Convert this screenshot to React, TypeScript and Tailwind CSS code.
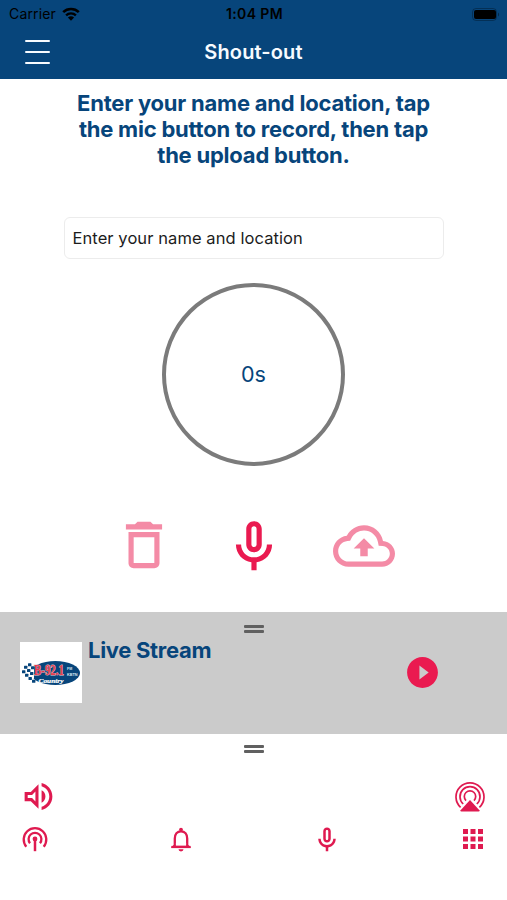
import type { ReactNode } from "react";
import cx from "clsx";

const App = () => (
  <div className="flex h-[900px] w-[507px] flex-col overflow-hidden bg-white font-['Inter','Liberation_Sans',sans-serif] text-[#07457b]">
    <Header />
    <Recorder />
    <Player />
    <Footer />
  </div>
);

const Header = () => (
  <header className="h-[79px] shrink-0 bg-[#07457b]">
    <div className="grid h-7 grid-cols-3 items-center pr-[7px] pl-[9px] text-black">
      <div className="flex items-center gap-[6px]">
        <span className="text-[14px] leading-none tracking-[0.15px]">Carrier</span>
        <svg width="18" height="14" viewBox="0 0 18 14" fill="none">
          <path d="M1.2 5.1a11.3 11.3 0 0 1 15.6 0" stroke="currentColor" strokeWidth="2.6" />
          <path d="M4.1 8.3a7.1 7.1 0 0 1 9.8 0" stroke="currentColor" strokeWidth="2.4" />
          <path d="M9 13.7 5.9 10.6a4.5 4.5 0 0 1 6.2 0Z" fill="currentColor" />
        </svg>
      </div>
      <span className="text-center text-[14px] leading-none font-semibold tracking-[0.4px] whitespace-nowrap">
        1:04 PM
      </span>
      <svg className="justify-self-end" width="28" height="13" viewBox="0 0 28 13">
        <rect x="0.5" y="0.5" width="24" height="12" rx="3.5" fill="none" stroke="#000" strokeOpacity="0.3" />
        <rect x="2" y="2" width="22" height="9" rx="2" />
        <path d="M26 4.5v4c1.4-.6 1.4-3.4 0-4Z" fillOpacity="0.4" />
      </svg>
    </div>
    <div className="grid h-12 grid-cols-[60px_1fr_60px] items-center text-[#f7fbff]">
      <button className="ml-[25px] flex w-[25px] flex-col gap-[8.5px]" aria-label="Menu">
        <span className="h-[2.5px] w-full rounded-full bg-current" />
        <span className="h-[2.5px] w-full rounded-full bg-current" />
        <span className="h-[2.5px] w-full rounded-full bg-current" />
      </button>
      <h1 className="text-center text-[20px] leading-none font-semibold tracking-[0.12px]">Shout-out</h1>
    </div>
  </header>
);

const Recorder = () => (
  <main className="flex h-[533px] shrink-0 flex-col items-center pt-[11px]">
    <h2 className="w-[380px] text-center text-[22px] leading-[26px] font-bold tracking-[-0.22px]">
      Enter your name and location, tap
      <br />
      the mic button to record, then tap
      <br />
      the upload button.
    </h2>
    <div className="mt-[49px] flex h-[42px] w-[380px] shrink-0 items-center rounded-md border border-[#ececec] px-2 text-[16.5px] tracking-[0.08px] text-[#1c1c1c]">
      Enter your name and location
    </div>
    <div className="mt-[24px] flex size-[183px] shrink-0 items-center justify-center rounded-full border-4 border-[#7b7b7b] text-[21.5px]">
      0s
    </div>
    <div className="mt-[48px] flex items-start gap-[48px] text-[#ea1a50]">
      <Icon name="trash" className="size-[62px] opacity-50" />
      <Icon name="mic" className="mt-[2px] size-[62px]" />
      <Icon name="upload" className="mt-px size-[62px] opacity-50" />
    </div>
  </main>
);

const Player = () => (
  <section className="h-[122px] shrink-0 bg-[#cbcbcb] pt-[13px]">
    <Handle />
    <div className="mt-[9px] flex items-start pl-5">
      <StationLogo />
      <h3 className="ml-[6px] w-[316px] text-[22px] leading-[16px] font-bold tracking-[-0.3px]">Live Stream</h3>
      <Icon name="play" className="mt-[12px] size-[37px] text-[#ea1a50]" />
    </div>
  </section>
);

const Footer = () => (
  <footer className="flex grow flex-col pt-[11px] text-[#df1a50]">
    <Handle />
    <div className="mt-[25px] flex items-center justify-between pr-[22px] pl-[20px]">
      <Icon name="volume" className="size-[37px]" />
      <AirPlay />
    </div>
    <div className="mt-[9px] flex justify-between pr-[19px] pl-5">
      <Antenna />
      <Bell />
      <Icon name="mic" className="mt-px size-[30px]" />
      <Icon name="apps" className="size-[30px]" />
    </div>
  </footer>
);

// Drag handle
const Handle = () => (
  <div className="mx-auto flex w-5 flex-col gap-[2px]">
    <span className="h-[3px] rounded-[1px] bg-[#606060]" />
    <span className="h-[3px] rounded-[1px] bg-[#606060]" />
  </div>
);

const paths = {
  trash: "M6 19c0 1.1.9 2 2 2h8c1.1 0 2-.9 2-2V7H6v12zM8 9h8v10H8V9zm7.5-5-1-1h-5l-1 1H5v2h14V4h-3.5z",
  mic: "M12 14c1.66 0 3-1.34 3-3V5c0-1.66-1.34-3-3-3S9 3.34 9 5v6c0 1.66 1.34 3 3 3zm-1-9c0-.55.45-1 1-1s1 .45 1 1v6c0 .55-.45 1-1 1s-1-.45-1-1V5zm6 6c0 2.76-2.24 5-5 5s-5-2.24-5-5H5c0 3.53 2.61 6.43 6 6.92V21h2v-3.08c3.39-.49 6-3.39 6-6.92h-2z",
  upload:
    "M19.35 10.04C18.67 6.59 15.64 4 12 4 9.11 4 6.6 5.64 5.35 8.04 2.34 8.36 0 10.91 0 14c0 3.31 2.69 6 6 6h13c2.76 0 5-2.24 5-5 0-2.64-2.05-4.78-4.65-4.96zM19 18H6c-2.21 0-4-1.79-4-4 0-2.05 1.53-3.76 3.56-3.97l1.07-.11.5-.95C8.08 7.14 9.94 6 12 6c2.62 0 4.88 1.86 5.39 4.43l.3 1.5 1.53.11c1.56.1 2.78 1.41 2.78 2.96 0 1.65-1.35 3-3 3zM8 13h2.55v3h2.9v-3H16l-4-4z",
  play: "M12 2C6.48 2 2 6.48 2 12s4.48 10 10 10 10-4.48 10-10S17.52 2 12 2zm-2 14.5v-9l6 4.5-6 4.5z",
  volume:
    "M3 9v6h4l5 5V4L7 9H3zm7-.17v6.34L7.83 13H5v-2h2.83L10 8.83zM14 7.97v8.05c1.48-.73 2.5-2.25 2.5-4.02A4.5 4.5 0 0 0 14 7.97zM14 3.23v2.06c2.89.86 5 3.54 5 6.71s-2.11 5.85-5 6.71v2.06c4.01-.91 7-4.49 7-8.77s-2.99-7.86-7-8.77z",
  apps: "M4 8h4V4H4v4zm6 12h4v-4h-4v4zm-6 0h4v-4H4v4zm0-6h4v-4H4v4zm6 0h4v-4h-4v4zm6-10v4h4V4h-4zm-6 4h4V4h-4v4zm6 6h4v-4h-4v4zm0 6h4v-4h-4v4z",
};

type IconProps = {
  name: keyof typeof paths;
  className?: string;
};

const Icon = ({ name, className }: IconProps) => (
  <svg viewBox="0 0 24 24" fill="currentColor" fillRule="evenodd" className={cx("shrink-0", className)}>
    <path d={paths[name]} />
  </svg>
);

const LineIcon = ({ children }: { children: ReactNode }) => (
  <svg width="30" height="30" viewBox="0 0 30 30" fill="none" stroke="currentColor" strokeWidth="2">
    {children}
  </svg>
);

const AirPlay = () => (
  <LineIcon>
    <path d="M5.6 25.3a14 14 0 1 1 18.8 0" strokeWidth="1.7" />
    <path d="M8.2 22a10 10 0 1 1 13.6 0" strokeWidth="1.7" />
    <path d="M11 18.6a5.7 5.7 0 1 1 8 0" strokeWidth="1.7" />
    <path d="M15 18 24.4 28.2q.5 1.3-.8 1.3H6.4q-1.3 0-.8-1.3Z" fill="currentColor" stroke="none" />
  </LineIcon>
);

const Antenna = () => (
  <LineIcon>
    <path d="M6.3 22.7a11.3 11.3 0 1 1 17.4 0" strokeWidth="2.3" />
    <path d="M10 19.2a6.4 6.4 0 1 1 10 0" strokeWidth="2.3" />
    <circle cx="15" cy="15" r="2.4" fill="currentColor" stroke="none" />
    <path d="M15 15v12.2" strokeWidth="2.5" />
  </LineIcon>
);

const Bell = () => (
  <LineIcon>
    <path d="M8.8 23v-8.5c0-4.2 2.4-7.2 6.2-7.2s6.2 3 6.2 7.2V23" strokeWidth="2.3" />
    <path d="M5.4 24.1v-1.3l3.4-2.5h12.4l3.4 2.5v1.3Z" fill="currentColor" stroke="none" />
    <path d="M9.9 19h10.2v2.7H9.9Z" fill="#fff" stroke="none" />
    <path d="M5.4 23h19.2" strokeWidth="2.2" />
    <circle cx="15" cy="5.6" r="1.9" fill="currentColor" stroke="none" />
    <path d="M12.5 25.3h5a2.5 2.1 0 0 1-5 0Z" fill="currentColor" stroke="none" />
  </LineIcon>
);

// Checkered flag on the left of the station logo
const flagSquares = [
  [8, 20.5],
  [4, 23],
  [11, 23.5],
  [7, 26.2],
  [2, 27.5],
  [10, 29.3],
  [5, 31],
  [8.5, 34.2],
  [12, 37],
];

const StationLogo = () => (
  <svg width="62" height="61" viewBox="0 -0.8 62 61" className="shrink-0 bg-white">
    <ellipse cx="35.3" cy="30.2" rx="24.7" ry="11.9" fill="#07457b" />
    <path d="M1.5 30C3 24 8 20 14 19.5v16C12 38 3 36 1.5 30Z" fill="#fff" />
    {flagSquares.map(([x, y]) => (
      <rect key={`${x}-${y}`} x={x} y={y} width="3.4" height="2.9" rx="0.5" fill="#07457b" />
    ))}
    <text
      x="14"
      y="32.6"
      textLength="30"
      lengthAdjust="spacingAndGlyphs"
      className="font-['Liberation_Serif',serif] text-[14px] font-bold"
      fill="#e63c4c"
      stroke="#f0c9d3"
      strokeWidth="0.8"
      paintOrder="stroke"
    >
      B-92.1
    </text>
    <text x="47" y="27.6" className="font-['Liberation_Sans',sans-serif] text-[3.6px] font-bold" fill="#dbe8f2">
      FM
    </text>
    <text
      x="47"
      y="33.2"
      textLength="10.5"
      lengthAdjust="spacingAndGlyphs"
      className="font-['Liberation_Sans',sans-serif] text-[3.8px] font-bold"
      fill="#dbe8f2"
    >
      KBTN
    </text>
    <text
      x="18.5"
      y="40"
      textLength="25"
      lengthAdjust="spacingAndGlyphs"
      className="font-['Liberation_Serif',serif] text-[6px] font-bold italic"
      fill="#fff"
      stroke="#fff"
      strokeWidth="0.2"
    >
      Country
    </text>
  </svg>
);

export default App;
